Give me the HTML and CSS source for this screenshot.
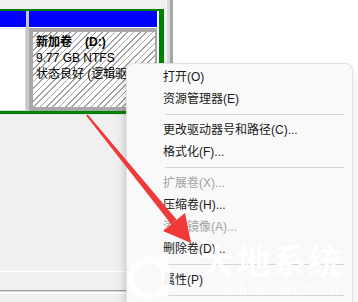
FILE: index.html
```html
<!DOCTYPE html>
<html lang="zh-CN">
<head>
<meta charset="utf-8">
<title>磁盘管理</title>
<link rel="stylesheet" href="styles.css">
</head>
<body>
<div class="screen">
  <div class="disk-pane">
    <div class="ext">
      <div class="col col-left">
        <div class="bar"></div>
        <div class="body-left"></div>
      </div>
      <div class="col col-right">
        <div class="bar"></div>
        <div class="vol">
          <div class="vol-text">
            <div class="vol-name">新加卷<span class="drv">(D:)</span></div>
            <div>9.77 GB NTFS</div>
            <div>状态良好 (逻辑驱动器)</div>
          </div>
        </div>
      </div>
    </div>
    <div class="lower">
      <div class="rule-white"></div>
      <div class="rule-gray"></div>
    </div>
  </div>
  <div class="splitter"></div>
  <div class="right-pane"></div>
</div>

<div class="menu">
  <div class="item">打开(O)</div>
  <div class="item">资源管理器(E)</div>
  <div class="sep"></div>
  <div class="item">更改驱动器号和路径(C)...</div>
  <div class="item">格式化(F)...</div>
  <div class="sep"></div>
  <div class="item disabled">扩展卷(X)...</div>
  <div class="item">压缩卷(H)...</div>
  <div class="item disabled">添加镜像(A)...</div>
  <div class="item">删除卷(D)...</div>
  <div class="sep"></div>
  <div class="item">属性(P)</div>
  <div class="sep"></div>
</div>

<svg class="arrow" width="358" height="302" viewBox="0 0 358 302">
  <polygon points="86,115.6 87.8,114.4 176.7,219.8 171.3,224.2" fill="#f03a3a"/>
  <polygon points="163,231 185,213 191,243" fill="#f03a3a"/>
</svg>

<div class="watermark">
  <svg class="wm-logo" width="48" height="52" viewBox="0 0 48 52">
    <circle cx="22" cy="30" r="18" fill="none" stroke="#ffffff" stroke-width="7"/>
    <path d="M38 4 V48" stroke="#ffffff" stroke-width="7" fill="none"/>
  </svg>
  <div class="wm-title">大地系统</div>
  <div class="wm-url">DadiGhost.com</div>
</div>
</body>
</html>
```

FILE: styles.css
```css
html, body {
  margin: 0;
  padding: 0;
}

body {
  width: 358px;
  height: 302px;
  overflow: hidden;
  position: relative;
  background: #ffffff;
  font-family: "Liberation Sans", "Noto Sans CJK SC", sans-serif;
  font-size: 12px;
}

.screen {
  display: flex;
  height: 302px;
}

.disk-pane {
  width: 166px;
  flex: none;
  background: #f0f0f0;
  padding-top: 9px;
  box-sizing: border-box;
  display: flex;
  flex-direction: column;
}

.ext {
  display: flex;
  gap: 3px;
  width: 159px;
  height: 100px;
  border-top: 2px solid #008000;
  border-right: 5px solid #008000;
  border-bottom: 3px solid #008000;
  background: #c8c8c8;
}

.col {
  display: flex;
  flex-direction: column;
  background: #ffffff;
}

.col-left {
  width: 26px;
}

.col-right {
  width: 128px;
  border-right: 2px solid #ffffff;
}

.bar {
  height: 16px;
  flex: none;
  background: #0000ff;
}

.body-left {
  flex: 1;
  margin-top: 1px;
  border-top: 1px solid #e2e2e2;
  border-right: 1px solid #d6d6d6;
  border-bottom: 1px solid #d6d6d6;
  background: #ffffff;
}

.vol {
  flex: 1;
  margin-top: 1px;
  border: 4px solid #a8a8a8;
  border-right-width: 2px;
  background: repeating-linear-gradient(135deg, #ffffff 0 3.4px, #a4a4a4 3.4px 4.5px);
  overflow: hidden;
}

.vol-text {
  padding: 2px 0 0 3px;
  line-height: 16px;
  white-space: nowrap;
  color: #000000;
}

.vol-name {
  font-weight: bold;
}

.drv {
  margin-left: 13px;
}

.lower {
  flex: 1;
  display: flex;
  flex-direction: column;
  border-top: 1px solid #e4e4e4;
}

.rule-white {
  margin-top: 156px;
  height: 1px;
  background: #ffffff;
}

.rule-gray {
  margin-top: 18px;
  height: 1px;
  background: #a0a0a0;
  border-bottom: 1px solid #d8d8d8;
  box-shadow: 0 2px 0 #ffffff;
}

.splitter {
  width: 7px;
  flex: none;
  background: linear-gradient(to right, #f6f6f6 0 1px, #dadada 1px 4px, #a6a6a6 4px 7px);
}

.right-pane {
  flex: 1;
  background: #ffffff;
}

.menu {
  position: absolute;
  left: 126px;
  top: 63px;
  width: 225px;
  height: 236px;
  padding: 2px 0 0;
  background: #f9f9f9;
  border: 1px solid #e2e2e2;
  border-bottom: none;
  border-radius: 8px 8px 0 0;
  box-shadow: -2px 2px 6px rgba(0, 0, 0, 0.10), 0 8px 16px rgba(0, 0, 0, 0.08);
}

.item {
  height: 22px;
  line-height: 22px;
  padding-left: 36px;
  color: #1a1a1a;
  white-space: nowrap;
}

.item.disabled {
  color: #a2a2a2;
}

.sep {
  height: 1px;
  margin: 4px 8px 4px 38px;
  background: #d6d6d6;
}

.arrow {
  position: absolute;
  left: 0;
  top: 0;
  pointer-events: none;
}

.watermark {
  position: absolute;
  left: 127px;
  top: 240px;
  width: 231px;
  height: 62px;
  pointer-events: none;
  color: #ffffff;
  text-shadow: 0 0 1px rgba(0, 0, 0, 0.04);
}

.wm-logo {
  position: absolute;
  left: 0;
  top: 8px;
  opacity: 0.9;
}

.wm-title {
  position: absolute;
  left: 73px;
  top: 2px;
  font-family: "Noto Sans CJK SC", sans-serif;
  font-weight: bold;
  font-size: 34px;
  line-height: 36px;
  letter-spacing: 2px;
  white-space: nowrap;
}

.wm-url {
  position: absolute;
  left: 81px;
  top: 38px;
  font-family: "Liberation Sans", sans-serif;
  font-size: 19px;
  line-height: 21px;
  white-space: nowrap;
}
```
